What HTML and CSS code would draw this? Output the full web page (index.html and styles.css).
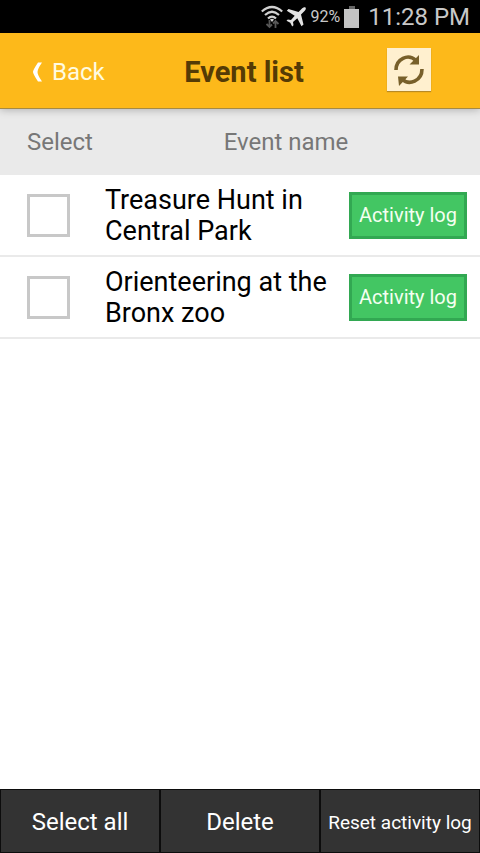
FILE: index.html
```html
<!DOCTYPE html>
<html lang="en">
<head>
<meta charset="utf-8">
<meta name="viewport" content="width=device-width, initial-scale=1">
<title>Event list</title>
<link rel="stylesheet" href="styles.css">
</head>
<body>
<div class="status">
  <svg class="wifi" viewBox="0 0 22 24" aria-hidden="true">
    <g fill="none" stroke="#d0d0d0" stroke-width="2.200">
      <path d="M.8 6.500Q11-2.500 21.200 6.500"/>
      <path d="M4 10Q11 3.500 18 10"/>
      <path d="M7 13.500Q11 9.500 15 13.500"/>
    </g>
    <path d="M9 14.500Q11 13 13 14.500L11 17z" fill="#d0d0d0"/>
    <path d="M8.500 15V22M5.500 19L8.500 22L11 19.500M14.500 23V16M12 18.500L14.500 16L17.500 19" fill="none" stroke="#585858" stroke-width="1.800"/>
  </svg>
  <svg class="plane" viewBox="0 0 20 20" aria-hidden="true">
    <path d="M19.500.5C18.500-.3 17 .5 16 1.500L12.500 5L2.500 2L.8 3.800L8.700 8.700L5 13L1.800 12.500L.5 13.800L4.300 15.700L6.200 19.500L7.500 18.200L7 15L11.300 11.300L15.500 19.200L17.500 17.500L15 7.500L18.500 4C19.500 3 20.300 1.500 19.500.5z" fill="#e2e2e2"/>
  </svg>
  <span class="percent">92%</span>
  <svg class="battery" viewBox="0 0 16 22" aria-hidden="true">
    <path d="M5 0h6v3H5z" fill="#666"/>
    <path d="M0 3h15v19H0z" fill="#c4c4c4"/>
  </svg>
  <time class="clock">11:28 PM</time>
</div>
<header class="bar">
  <a class="back" href="#">
    <svg class="chevron" viewBox="0 0 10 20" aria-hidden="true"><path d="M6 .5H10Q5.500 7 5.500 10T10 19.500H6Q1 12 1 10T6 .5z" fill="#fff"/></svg>
    Back
  </a>
  <h1 class="title">Event list</h1>
  <button class="refresh" type="button" aria-label="Refresh">
    <svg class="arrows" viewBox="0 0 32 32" aria-hidden="true">
      <g fill="none" stroke="#78602a" stroke-width="3.600">
        <path d="M3 16C3 5 15-1 23 6.500"/>
        <path d="M29 15C29 27 16 32 9 25"/>
      </g>
      <path d="M26 1V10.500H16.500zM5 22.500H15L6 32z" fill="#78602a"/>
    </svg>
  </button>
</header>
<main class="content">
  <table class="events">
    <colgroup><col class="col-select"><col><col class="col-log"></colgroup>
    <thead>
      <tr><th class="select-head" scope="col">Select</th><th scope="col" colspan="2">Event name</th></tr>
    </thead>
    <tbody>
      <tr>
        <td class="pick"><input class="box" type="checkbox" id="event-1"></td>
        <td class="name"><label for="event-1">Treasure Hunt in Central Park</label></td>
        <td class="action"><button class="log" type="button">Activity log</button></td>
      </tr>
      <tr>
        <td class="pick"><input class="box" type="checkbox" id="event-2"></td>
        <td class="name"><label for="event-2">Orienteering at the Bronx zoo</label></td>
        <td class="action"><button class="log" type="button">Activity log</button></td>
      </tr>
    </tbody>
  </table>
</main>
<footer class="tools">
  <button class="tool" type="button">Select all</button>
  <button class="tool" type="button">Delete</button>
  <button class="tool small" type="button">Reset activity log</button>
</footer>
</body>
</html>
```
FILE: styles.css
```css
* { box-sizing: border-box; }

body {
  margin: 0;
  min-height: 100vh;
  display: flex;
  flex-direction: column;
  background: #fff;
  color: #000;
  font-family: Roboto, "Liberation Sans", sans-serif;
}

button { font-family: inherit; cursor: pointer; }

.status {
  height: 33px;
  padding: 0 10px;
  display: flex;
  align-items: center;
  justify-content: flex-end;
  background: #000;
  color: #c8c8c8;
}
.wifi { width: 22px; height: 24px; margin-right: 3px; }
.plane { width: 20px; height: 20px; margin-right: 4px; }
.percent { font-size: 16px; margin-right: 4px; }
.battery { width: 16px; height: 22px; margin-right: 8px; }
.clock { font-size: 24px; }

.bar {
  height: 76px;
  padding: 2px 24px 0 32px;
  display: grid;
  grid-template-columns: 1fr auto 1fr;
  align-items: center;
  position: relative;
  background: #fdb91a;
  border-bottom: 1px solid #a58a45;
  box-shadow: 0 1px 8px rgba(0, 0, 0, 0.25);
}
.back {
  display: flex;
  align-items: center;
  gap: 10px;
  color: #fffbe0;
  font-size: 24px;
  text-decoration: none;
}
.chevron { width: 10px; height: 20px; }
.title { margin: 0; color: #553b05; font-size: 29px; font-weight: 700; }
.refresh {
  width: 44px;
  height: 43px;
  margin: 0 25px 4px 0;
  padding: 0;
  display: grid;
  place-items: center;
  justify-self: end;
  border: 0;
  background: #fff0cf;
  box-shadow: 0 1px 1px #b88a25;
}
.arrows { width: 32px; height: 32px; }

.content { flex: 1; }
.events { width: 100%; table-layout: fixed; border-spacing: 0; }
.col-select { width: 92px; }
.col-log { width: 140px; }
th {
  height: 66px;
  padding: 0;
  background: #eaeaea;
  color: #777;
  font-size: 24px;
  font-weight: 400;
}
.select-head { padding-left: 27px; text-align: left; }
td { height: 82px; padding: 0; border-bottom: 2px solid #eaeaea; }
.pick { padding-left: 27px; }
.box {
  appearance: none;
  display: block;
  width: 43px;
  height: 43px;
  margin: 0;
  border: 3px solid #c8c8c8;
  background: #fff;
}
.box:checked { background: #43c663; }
.name { padding: 2px 0 0 13px; font-size: 27px; line-height: 31px; }
.name label { display: block; }
.action { padding-right: 13px; }
.log {
  display: block;
  width: 118px;
  height: 47px;
  margin-left: auto;
  padding: 0;
  border: 3px solid #32a852;
  background: #43c663;
  color: #f4fff0;
  font-size: 20px;
}

.tools { height: 64px; display: grid; grid-template-columns: repeat(3, 1fr); }
.tool {
  padding: 2px 0 0;
  border: 1px solid #0c0c0c;
  background: #333;
  color: #fff;
  font-size: 24px;
  white-space: nowrap;
}
.small { font-size: 19px; }
```
